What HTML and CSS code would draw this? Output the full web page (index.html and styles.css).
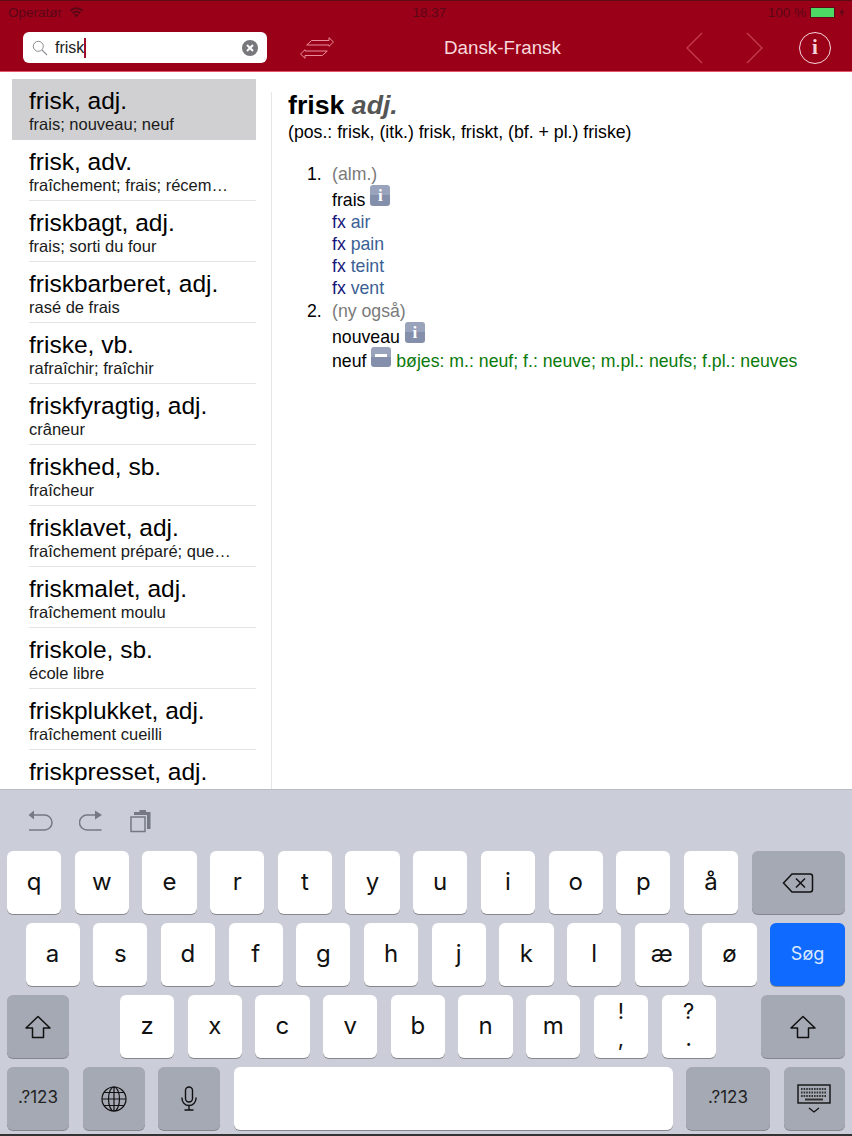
FILE: index.html
```html
<!DOCTYPE html>
<html lang="da">
<head>
<meta charset="utf-8">
<title>Dansk-Fransk</title>
<link rel="stylesheet" href="styles.css">
</head>
<body>
<div class="app">
  <header class="header">
    <div class="status">
      <div class="status-left">
        <span>Operatør</span>
        <svg class="wifi" width="15" height="11" viewBox="0 0 15 11"><path d="M7.500 10.500 L5.300 8 A3.200 3.200 0 0 1 9.700 8 Z" fill="#5a0716"/><path d="M3.600 6.200 A5.700 5.700 0 0 1 11.400 6.200 M1.400 3.800 A8.800 8.800 0 0 1 13.600 3.800" fill="none" stroke="#5a0716" stroke-width="2"/></svg>
      </div>
      <span class="status-time">18.37</span>
      <div class="status-right">
        <span>100 %</span>
        <span class="battery"><span class="battery-fill"></span></span>
        <svg width="6" height="9" viewBox="0 0 6 9"><path d="M3.600 0 L0.600 5 H2.600 L2 9 L5.400 3.600 H3.200 Z" fill="#5a0716"/></svg>
      </div>
    </div>
    <div class="toolbar">
      <div class="search">
        <svg class="search-icon" width="16" height="16" viewBox="0 0 16 16"><circle cx="6.300" cy="6.300" r="5" fill="none" stroke="#8e8e93" stroke-width="1"/><path d="M10 10 L15 15" stroke="#8e8e93" stroke-width="1.100"/></svg>
        <span class="search-text">frisk</span><span class="caret"></span>
        <svg class="clear" width="16" height="16" viewBox="0 0 16 16"><circle cx="8" cy="8" r="8" fill="#77777c"/><path d="M5 5 L11 11 M11 5 L5 11" stroke="#fff" stroke-width="2"/></svg>
      </div>
      <svg class="swap" width="34" height="22" viewBox="0 0 34 22"><path d="M6.700 8 L11.700 3.500 H29 V0.700 L33.500 5 L29 9.300 V8 Z M27.300 14 L22.300 18.500 H5 V21.300 L0.500 17 L5 12.700 V14 Z" fill="none" stroke="#ea8d9a" stroke-width="1"/></svg>
      <div class="title">Dansk-Fransk</div>
      <svg class="chev" width="17" height="32" viewBox="0 0 17 32"><path d="M16 1 L1 16 L16 31" fill="none" stroke="#c8404f" stroke-width="1.200"/></svg>
      <svg class="chev chev-next" width="17" height="32" viewBox="0 0 17 32"><path d="M1 1 L16 16 L1 31" fill="none" stroke="#c8404f" stroke-width="1.200"/></svg>
      <div class="info-btn">i</div>
    </div>
  </header>

  <main class="main">
    <nav class="list">
      <a class="row row-active"><div class="row-title">frisk, adj.</div><div class="row-sub">frais; nouveau; neuf</div></a>
      <a class="row"><div class="row-title">frisk, adv.</div><div class="row-sub">fraîchement; frais; récem…</div></a>
      <a class="row"><div class="row-title">friskbagt, adj.</div><div class="row-sub">frais; sorti du four</div></a>
      <a class="row"><div class="row-title">friskbarberet, adj.</div><div class="row-sub">rasé de frais</div></a>
      <a class="row"><div class="row-title">friske, vb.</div><div class="row-sub">rafraîchir; fraîchir</div></a>
      <a class="row"><div class="row-title">friskfyragtig, adj.</div><div class="row-sub">crâneur</div></a>
      <a class="row"><div class="row-title">friskhed, sb.</div><div class="row-sub">fraîcheur</div></a>
      <a class="row"><div class="row-title">frisklavet, adj.</div><div class="row-sub">fraîchement préparé; que…</div></a>
      <a class="row"><div class="row-title">friskmalet, adj.</div><div class="row-sub">fraîchement moulu</div></a>
      <a class="row"><div class="row-title">friskole, sb.</div><div class="row-sub">école libre</div></a>
      <a class="row"><div class="row-title">friskplukket, adj.</div><div class="row-sub">fraîchement cueilli</div></a>
      <a class="row"><div class="row-title">friskpresset, adj.</div><div class="row-sub">fraîchement pressé</div></a>
    </nav>
    <article class="entry">
      <h1 class="headword">frisk <em class="pos">adj.</em></h1>
      <p class="forms">(pos.: frisk, (itk.) frisk, friskt, (bf. + pl.) friske)</p>
      <div class="sense">
        <span class="num">1.</span>
        <div class="sense-body">
          <div class="line note">(alm.)</div>
          <div class="line line-badge">frais <span class="badge">i</span></div>
          <div class="line"><span class="fx">fx</span> <span class="ex">air</span></div>
          <div class="line"><span class="fx">fx</span> <span class="ex">pain</span></div>
          <div class="line"><span class="fx">fx</span> <span class="ex">teint</span></div>
          <div class="line"><span class="fx">fx</span> <span class="ex">vent</span></div>
        </div>
      </div>
      <div class="sense">
        <span class="num">2.</span>
        <div class="sense-body">
          <div class="line note">(ny også)</div>
          <div class="line line-badge">nouveau <span class="badge">i</span></div>
          <div class="line line-badge">neuf <span class="badge badge-minus"><span class="minus"></span></span> <span class="inflect">bøjes: m.: neuf; f.: neuve; m.pl.: neufs; f.pl.: neuves</span></div>
        </div>
      </div>
    </article>
  </main>

  <section class="keyboard">
    <div class="kb-tools">
      <svg width="26" height="24" viewBox="0 0 26 24"><path d="M5 6 H16.500 A7.500 7.500 0 0 1 16.500 21 H1" fill="none" stroke="#757983" stroke-width="1.500"/><path d="M0.500 6 L6 1.500 V10.500 Z" fill="#757983"/></svg>
      <svg width="26" height="24" viewBox="0 0 26 24"><path d="M22.500 21 H8 A7.500 7.500 0 0 1 8 6 H18" fill="none" stroke="#757983" stroke-width="1.500"/><path d="M23 6 L16 1.500 V10.500 Z" fill="#757983"/></svg>
      <svg width="22" height="24" viewBox="0 0 22 24"><path d="M1 8 H15 V22.500 H1 Z" fill="none" stroke="#757983" stroke-width="1.500"/><path d="M4 6 V3 H9.500 V1 H16 V3 H20.500 V20 H17 V6 Z" fill="#757983"/></svg>
    </div>
    <div class="kb-row">
      <div class="key">q</div><div class="key">w</div><div class="key">e</div><div class="key">r</div><div class="key">t</div><div class="key">y</div><div class="key">u</div><div class="key">i</div><div class="key">o</div><div class="key">p</div><div class="key">å</div>
      <div class="key key-dark key-fill"><svg width="32" height="22" viewBox="0 0 32 22"><path d="M1.500 11 L10 2 H28 A2.500 2.500 0 0 1 30.500 4.500 V17.500 A2.500 2.500 0 0 1 28 20 H10 Z" fill="none" stroke="#111" stroke-width="1.500"/><path d="M14 6.500 L23 15.500 M23 6.500 L14 15.500" stroke="#111" stroke-width="1.500"/></svg></div>
    </div>
    <div class="kb-row kb-row-indent">
      <div class="key">a</div><div class="key">s</div><div class="key">d</div><div class="key">f</div><div class="key">g</div><div class="key">h</div><div class="key">j</div><div class="key">k</div><div class="key">l</div><div class="key">æ</div><div class="key">ø</div>
      <div class="key key-go key-fill">Søg</div>
    </div>
    <div class="kb-row">
      <div class="key key-dark key-side"><svg width="26" height="24" viewBox="0 0 26 24"><path d="M13 1.500 L25 13 H18.500 V22.500 H7.500 V13 H1 Z" fill="none" stroke="#111" stroke-width="1.500" stroke-linejoin="round"/></svg></div>
      <div class="key key-z">z</div><div class="key">x</div><div class="key">c</div><div class="key">v</div><div class="key">b</div><div class="key">n</div><div class="key">m</div>
      <div class="key key-stack"><span>!</span><span>,</span></div><div class="key key-stack"><span>?</span><span>.</span></div>
      <div class="key key-dark key-shift-right"><svg width="26" height="24" viewBox="0 0 26 24"><path d="M13 1.500 L25 13 H18.500 V22.500 H7.500 V13 H1 Z" fill="none" stroke="#111" stroke-width="1.500" stroke-linejoin="round"/></svg></div>
    </div>
    <div class="kb-row">
      <div class="key key-dark key-side key-small">.?123</div>
      <div class="key key-dark key-side"><svg width="26" height="26" viewBox="0 0 26 26"><g fill="none" stroke="#111" stroke-width="1.200"><circle cx="13" cy="13" r="12"/><ellipse cx="13" cy="13" rx="5.500" ry="12"/><path d="M13 1 V25 M1 13 H25 M3 6.500 H23 M3 19.500 H23"/></g></svg></div>
      <div class="key key-dark key-side"><svg width="16" height="25" viewBox="0 0 16 25"><g fill="none" stroke="#111" stroke-width="1.400"><rect x="4.500" y="1" width="7" height="15" rx="3.500"/><path d="M1 11.500 V12.500 A7 7 0 0 0 15 12.500 V11.500 M8 19.500 V24 M3.500 24 H12.500"/></g></svg></div>
      <div class="key key-space"></div>
      <div class="key key-dark key-wide key-small">.?123</div>
      <div class="key key-dark key-fill"><svg width="34" height="30" viewBox="0 0 34 30"><rect x="1" y="1" width="32" height="18" fill="none" stroke="#111" stroke-width="1.400"/><path d="M4 5 H30 M4 8.500 H30 M4 12 H30" stroke="#333" stroke-width="2" stroke-dasharray="1.600 1"/><path d="M8 15.500 H26" stroke="#333" stroke-width="2"/><path d="M12 24 L17 28 L22 24" fill="none" stroke="#111" stroke-width="1.300"/></svg></div>
    </div>
  </section>
</div>
</body>
</html>
```
FILE: styles.css
```css
* { box-sizing: border-box; }
html, body { margin: 0; padding: 0; }
body {
  width: 852px;
  height: 1136px;
  overflow: hidden;
  background: #fff;
  font-family: "Liberation Sans", Arial, sans-serif;
  color: #000;
}
.app { display: flex; flex-direction: column; height: 1136px; }

/* header */
.header {
  height: 72px;
  flex: none;
  background: #9b0019;
  border-top: 1px solid #5c0a15;
  border-bottom: 1px solid #e2566a;
}
.status {
  display: flex;
  align-items: center;
  justify-content: space-between;
  height: 22px;
  padding: 0 7px 0 8px;
  font-size: 13.500px;
  color: #5a0716;
}
.status-left, .status-right { display: flex; align-items: center; }
.wifi { margin-left: 7px; }
.status-left { width: 300px; }
.status-time { margin-left: 6px; }
.status-right { width: 300px; justify-content: flex-end; gap: 4px; }
.battery { width: 25px; height: 11px; background: #5f0a18; padding: 1px; display: block; }
.battery-fill { display: block; width: 100%; height: 100%; background: #4cd964; }

.toolbar {
  display: flex;
  align-items: center;
  height: 48px;
  padding: 1px 0 0 23px;
}
.search {
  display: flex;
  align-items: center;
  width: 244px;
  height: 31px;
  background: #fff;
  border-radius: 6px;
  padding: 0 9px;
  font-size: 16px;
  color: #222;
}
.search-icon { flex: none; }
.search-text { margin-left: 7px; }
.caret { width: 2px; height: 20px; background: #a00c2a; }
.clear { margin-left: auto; }
.swap { margin-left: 33px; flex: none; }
.title {
  margin-left: 110px;
  width: 118px;
  font-size: 18.800px;
  color: #f7d9dd;
  white-space: nowrap;
}
.chev { margin-left: 124px; flex: none; }
.chev-next { margin-left: 43px; }
.info-btn {
  margin-left: 36px;
  width: 32px;
  height: 32px;
  border: 1.500px solid #f6d5da;
  border-radius: 50%;
  color: #f6d5da;
  font-family: "Liberation Serif", serif;
  font-weight: bold;
  font-size: 21px;
  line-height: 28px;
  text-align: center;
}

/* main */
.main {
  flex: 1;
  min-height: 0;
  display: flex;
  overflow: hidden;
  padding-top: 7px;
}
.list {
  flex: none;
  width: 244px;
  margin-left: 12px;
  overflow: hidden;
}
.row {
  display: block;
  height: 61px;
  padding: 8px 0 0 17px;
  background: linear-gradient(#e4e4e6, #e4e4e6) 17px 100% / 100% 1px no-repeat;
}
.row-active { background: #d0d0d2; }
.row-title { font-size: 24.500px; line-height: 28px; white-space: nowrap; }
.row-sub { font-size: 16.500px; line-height: 19px; color: #1a1a1a; white-space: nowrap; }

.entry {
  flex: 1;
  margin: 13px 0 0 15px;
  border-left: 1px solid #e6e6ea;
  padding-left: 16px;
}
.headword {
  margin: -1px 0 0;
  font-size: 26.700px;
  line-height: 28px;
  font-weight: bold;
}
.pos { color: #555; font-style: italic; }
.forms { margin: 3px 0 0; font-size: 17.700px; line-height: 20px; }
.sense { display: flex; font-size: 17.700px; line-height: 22px; padding-left: 19px; }
.forms + .sense { margin-top: 21px; }
.num { width: 25px; flex: none; }
.line { height: 22.250px; white-space: nowrap; }
.line-badge { height: 25.250px; }
.note { color: #7a7a7a; }
.fx { color: #14147a; }
.ex { color: #3c5f95; }
.inflect { color: #0a7a0a; }
.badge {
  display: inline-block;
  vertical-align: 4.500px;
  width: 20px;
  height: 21px;
  border-radius: 3px;
  background: linear-gradient(#99a3bb 50%, #848fab 50%);
  color: #fff;
  font-family: "Liberation Serif", serif;
  font-weight: bold;
  font-size: 17px;
  line-height: 21px;
  text-align: center;
}
.badge-minus { padding-top: 7px; vertical-align: 0; height: 20px; }
.minus { display: block; width: 12px; height: 3px; background: #fff; margin: 0 auto; }

/* keyboard */
.keyboard {
  flex: none;
  height: 347px;
  background: #cbced8;
  border-top: 1px solid #b9bcc6;
  border-bottom: 2px solid #333;
}
.kb-tools {
  display: flex;
  align-items: center;
  height: 61px;
  padding: 0 0 0 28px;
  gap: 25px;
}
.kb-row {
  display: flex;
  gap: 13.500px;
  height: 63px;
  padding: 0 7px;
  margin-bottom: 9px;
}
.kb-row-indent { padding-left: 25.500px; }
.key {
  flex: none;
  width: 54.200px;
  display: flex;
  align-items: center;
  justify-content: center;
  padding-bottom: 3px;
  background: #fff;
  border-radius: 6px;
  box-shadow: 0 1px 0 #85878d;
  font-family: Inter, "Liberation Sans", sans-serif;
  font-size: 24px;
  color: #111;
}
.key-dark { background: #a4a9b4; padding-bottom: 0; }
.key-fill { flex: 1; width: auto; }
.key-go { background: #0f6bff; color: #dbe8ff; font-size: 18px; }
.key-side { width: 62px; }
.key-z { margin-left: 37.500px; }
.key-shift-right { width: 84px; margin-left: 31.500px; }
.key-space { width: 439px; }
.key-wide { width: 84px; }
.key-small { font-size: 17px; color: #222; padding-bottom: 3px; }
.key-stack { flex-direction: column; font-size: 22px; line-height: 26.800px; }
```
